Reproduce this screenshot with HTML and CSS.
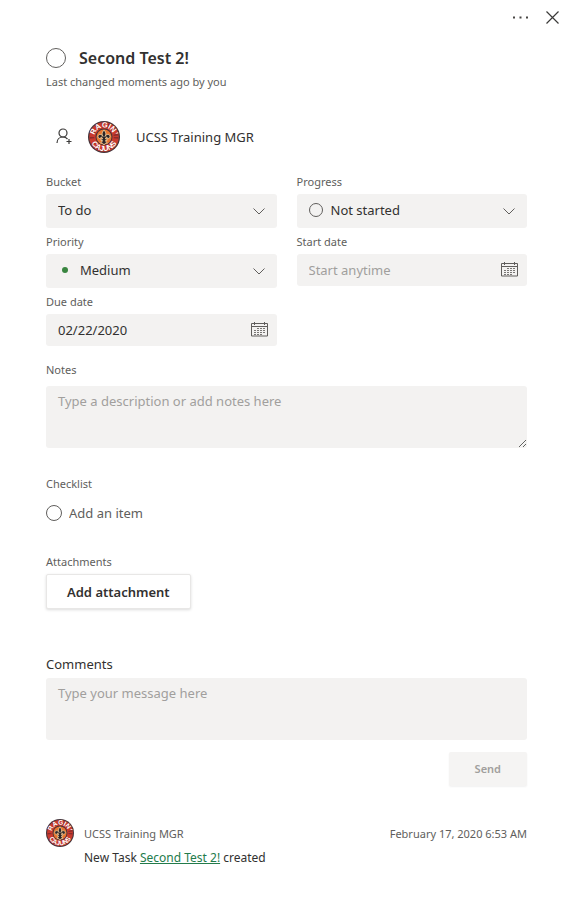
FILE: index.html
```
<!DOCTYPE html>
<html lang="en">
<head>
  <meta charset="UTF-8" />
  <meta name="viewport" content="width=device-width, initial-scale=1.0" />
  <title>Second Test 2!</title>
  <link rel="stylesheet" href="styles.css">
</head>
<body>
  <!-- shared icons -->
  <svg class="sprite" aria-hidden="true">
    <symbol id="logo" viewBox="0 0 64 64">
      <circle cx="32" cy="32" r="32" fill="#45343a" />
      <circle cx="32" cy="32" r="29.500" fill="#c93a2e" />
      <circle cx="32" cy="32" r="24" fill="none" stroke="#8d2b2b" stroke-width="9" stroke-dasharray="3 9" />
      <circle cx="32" cy="32" r="17" fill="#45343a" />
      <circle cx="32" cy="32" r="15" fill="#e8752f" />
      <path d="M32 18c-5 6-4 9-2 13-3-6-10-5-10 0 0 4 4 5 6 3-1-3 3-2 3 2h-3v3h3c-1 3-2 4-4 5 4 0 6 1 7 4 1-3 3-4 7-4-2-1-3-2-4-5h3v-3h-3c0-4 4-5 3-2 2 2 6 1 6-3 0-5-7-6-10 0 2-4 3-7-2-13z" fill="#2c2426" stroke="#f3ddb0" stroke-width="1.500" />
    </symbol>
    <symbol id="calendar" viewBox="0 0 17 16">
      <path d="M.5 2.500h16v12.500H.5zM.5 5.500h16M3.500 1v3M13.500 1v3" fill="none" stroke="#605e5c" />
      <path d="M6 7.500h9M3 9.500h12M3 11.500h12M3 13.500h9" fill="none" stroke="#797775" stroke-dasharray="2 1" />
    </symbol>
    <symbol id="chevron" viewBox="0 0 12 7">
      <path d="M.5.500l5.500 5.500 5.500-5.500" fill="none" stroke="#605e5c" />
    </symbol>
  </svg>

  <div class="topbar">
    <button type="button" aria-label="More options">
      <svg width="15" height="3" viewBox="0 0 15 3" fill="#484644"><path d="M0 .5h2v2H0zM6.500.5h2v2h-2zM13 .5h2v2h-2z" /></svg>
    </button>
    <button type="button" aria-label="Close">
      <svg width="13" height="13" viewBox="0 0 13 13"><path d="M.5.500l12 12M12.500.500l-12 12" stroke="#3b3a39" stroke-width="1.200" /></svg>
    </button>
  </div>

  <main class="task">
    <header class="task-header">
      <div class="title-row">
        <input type="checkbox" class="circle circle-large" id="complete" aria-label="Mark task complete">
        <h1>Second Test 2!</h1>
      </div>
      <p class="changed">Last changed moments ago by you</p>
    </header>

    <div class="assignee">
      <button type="button" class="assign" aria-label="Assign">
        <svg width="16" height="18" viewBox="0 0 16 18" fill="none" stroke="#3b3a39" stroke-width="1.200">
          <circle cx="7" cy="5" r="4" />
          <path d="M1 15c0-3.500 2.500-6 6-6 2 0 3.500.8 4.500 2M13 11v5M10.500 13.500h5" />
        </svg>
      </button>
      <svg class="avatar" viewBox="0 0 64 64" role="img" aria-label="Ragin’ Cajuns">
        <path id="arcTop" d="M14 38a19 19 0 1 1 36 0" fill="none" />
        <path id="arcBottom" d="M4 32a28 28 0 0 0 56 0" fill="none" />
        <use href="#logo" />
        <text class="logo-text"><textPath href="#arcTop" startOffset="50%">RAGIN’</textPath></text>
        <text class="logo-text"><textPath href="#arcBottom" startOffset="50%">CAJUNS</textPath></text>
      </svg>
      <span>UCSS Training MGR</span>
    </div>

    <div class="fields">
      <div class="field">
        <label for="bucket">Bucket</label>
        <div class="control">
          <select id="bucket"><option>To do</option></select>
          <svg class="chevron"><use href="#chevron" /></svg>
        </div>
      </div>
      <div class="field">
        <label for="progress">Progress</label>
        <div class="control">
          <span class="ring"></span>
          <select id="progress" class="with-ring"><option>Not started</option></select>
          <svg class="chevron"><use href="#chevron" /></svg>
        </div>
      </div>
      <div class="field">
        <label for="priority">Priority</label>
        <div class="control">
          <span class="dot"></span>
          <select id="priority" class="with-dot"><option>Medium</option></select>
          <svg class="chevron"><use href="#chevron" /></svg>
        </div>
      </div>
      <div class="field">
        <label for="start">Start date</label>
        <div class="control">
          <input type="text" id="start" placeholder="Start anytime">
          <button type="button" class="pick" aria-label="Pick start date"><svg><use href="#calendar" /></svg></button>
        </div>
      </div>
      <div class="field">
        <label for="due">Due date</label>
        <div class="control">
          <input type="text" id="due" value="02/22/2020">
          <button type="button" class="pick" aria-label="Pick due date"><svg><use href="#calendar" /></svg></button>
        </div>
      </div>
    </div>

    <div class="notes">
      <label for="notes">Notes</label>
      <textarea id="notes" placeholder="Type a description or add notes here"></textarea>
    </div>

    <section class="checklist">
      <h2>Checklist</h2>
      <div class="new-item">
        <input type="checkbox" class="circle" aria-label="Item done">
        <input type="text" placeholder="Add an item" aria-label="Add an item">
      </div>
    </section>

    <section class="attachments">
      <h2>Attachments</h2>
      <button type="button" class="btn">Add attachment</button>
    </section>

    <form class="comments">
      <label for="comment">Comments</label>
      <textarea id="comment" placeholder="Type your message here"></textarea>
      <button type="submit" class="btn send" disabled>Send</button>
    </form>

    <article class="activity">
      <svg class="avatar avatar-small" viewBox="0 0 64 64" role="img" aria-label="Ragin’ Cajuns">
        <use href="#logo" />
        <text class="logo-text"><textPath href="#arcTop" startOffset="50%">RAGIN’</textPath></text>
        <text class="logo-text"><textPath href="#arcBottom" startOffset="50%">CAJUNS</textPath></text>
      </svg>
      <div class="activity-body">
        <div class="activity-meta">
          <span>UCSS Training MGR</span>
          <time datetime="2020-02-17T06:53">February 17, 2020 6:53 AM</time>
        </div>
        <p>New Task <a href="#">Second Test 2!</a> created</p>
      </div>
    </article>
  </main>
</body>
</html>
```
FILE: styles.css
```
* {
  box-sizing: border-box;
}

body {
  margin: 0;
  background-color: #fff;
  color: #323130;
  font-family: 'Noto Sans', 'Open Sans', sans-serif;
  font-size: 13px;
  line-height: 20px;
}

h1, h2, p {
  margin: 0;
}

button, input, select, textarea {
  font: inherit;
  color: inherit;
}

button {
  background: none;
  border: none;
  padding: 0;
  cursor: pointer;
}

svg {
  display: block;
}

.sprite {
  position: absolute;
  width: 0;
  height: 0;
}

.logo-text {
  font-family: 'Liberation Sans', sans-serif;
  font-size: 15px;
  font-weight: bold;
  fill: #fff;
  text-anchor: middle;
}

.topbar {
  display: flex;
  justify-content: flex-end;
  align-items: center;
  gap: 18px;
  height: 34px;
  padding-right: 10px;
}

.task {
  padding: 12px 42px 36px 46px;
}

.title-row {
  display: flex;
  align-items: center;
  gap: 13px;
  height: 24px;
}

h1 {
  font-size: 16px;
  font-weight: 600;
}

.circle {
  appearance: none;
  flex: none;
  width: 16px;
  height: 16px;
  margin: 0;
  border: 1px solid #605e5c;
  border-radius: 50%;
}

.circle-large {
  width: 20px;
  height: 20px;
}

.changed {
  margin-top: 2px;
  color: #605e5c;
  font-size: 11px;
}

.assignee {
  display: flex;
  align-items: center;
  gap: 16px;
  margin: 29px 0 21px;
  padding-left: 10px;
}

.avatar {
  flex: none;
  width: 32px;
  height: 32px;
}

.fields {
  display: grid;
  grid-template-columns: 1fr 1fr;
  gap: 6px 20px;
}

label, h2 {
  display: block;
  color: #605e5c;
  font-size: 11px;
  font-weight: normal;
  line-height: 16px;
}

.field label {
  padding-bottom: 4px;
}

.control {
  position: relative;
}

.control select,
.control input {
  appearance: none;
  display: block;
  width: 100%;
  height: 34px;
  padding: 0 40px 2px 12px;
  border: none;
  border-radius: 3px;
  background-color: #f3f2f1;
}

.control input {
  height: 32px;
  padding-bottom: 0;
}

.control .with-ring,
.control .with-dot {
  padding-left: 34px;
}

::placeholder {
  color: #a19f9d;
  opacity: 1;
}

.chevron {
  position: absolute;
  top: 14px;
  right: 12px;
  width: 12px;
  height: 7px;
  pointer-events: none;
}

.ring {
  position: absolute;
  top: 9px;
  left: 12px;
  width: 14px;
  height: 14px;
  border: 1px solid #605e5c;
  border-radius: 50%;
}

.dot {
  position: absolute;
  top: 13px;
  left: 16px;
  width: 6px;
  height: 6px;
  border-radius: 50%;
  background-color: #398540;
}

.pick {
  position: absolute;
  top: 7px;
  right: 9px;
}

.pick svg {
  width: 17px;
  height: 16px;
}

.notes {
  margin-top: 16px;
}

.notes label {
  padding-bottom: 8px;
}

textarea {
  display: block;
  width: 100%;
  height: 62px;
  padding: 5px 12px;
  border: none;
  border-radius: 3px;
  background-color: #f3f2f1;
  resize: none;
}

.notes textarea {
  resize: vertical;
}

.checklist {
  margin-top: 28px;
}

.new-item {
  display: flex;
  align-items: center;
  gap: 7px;
  margin-top: 11px;
}

.new-item input[type="text"] {
  flex: 1;
  height: 20px;
  padding: 0;
  border: none;
  background: none;
}

.new-item input::placeholder {
  color: #605e5c;
}

.attachments {
  margin-top: 31px;
}

.btn {
  height: 35px;
  margin-top: 4px;
  padding: 0 20px;
  border: 1px solid #e8e7e6;
  border-radius: 2px;
  background-color: #fff;
  box-shadow: 0 1px 3px rgba(0, 0, 0, 0.14);
  font-weight: 600;
}

.comments {
  display: flex;
  flex-direction: column;
  margin-top: 45px;
}

.comments label {
  padding-bottom: 4px;
  color: #323130;
  font-size: 13px;
  line-height: 20px;
}

.send {
  align-self: flex-end;
  height: 34px;
  margin-top: 12px;
  padding: 0 26px;
  border: none;
  background-color: #f5f4f3;
  box-shadow: 0 1px 2px rgba(0, 0, 0, 0.06);
  color: #a19f9d;
  font-size: 11px;
  cursor: default;
}

.activity {
  display: flex;
  gap: 10px;
  margin-top: 33px;
}

.avatar-small {
  width: 28px;
  height: 28px;
}

.activity-body {
  flex: 1;
  padding-top: 5px;
  font-size: 12px;
}

.activity-meta {
  display: flex;
  justify-content: space-between;
  margin-bottom: 4px;
  color: #605e5c;
  font-size: 11px;
}

.activity a {
  color: #237b4b;
}
```
